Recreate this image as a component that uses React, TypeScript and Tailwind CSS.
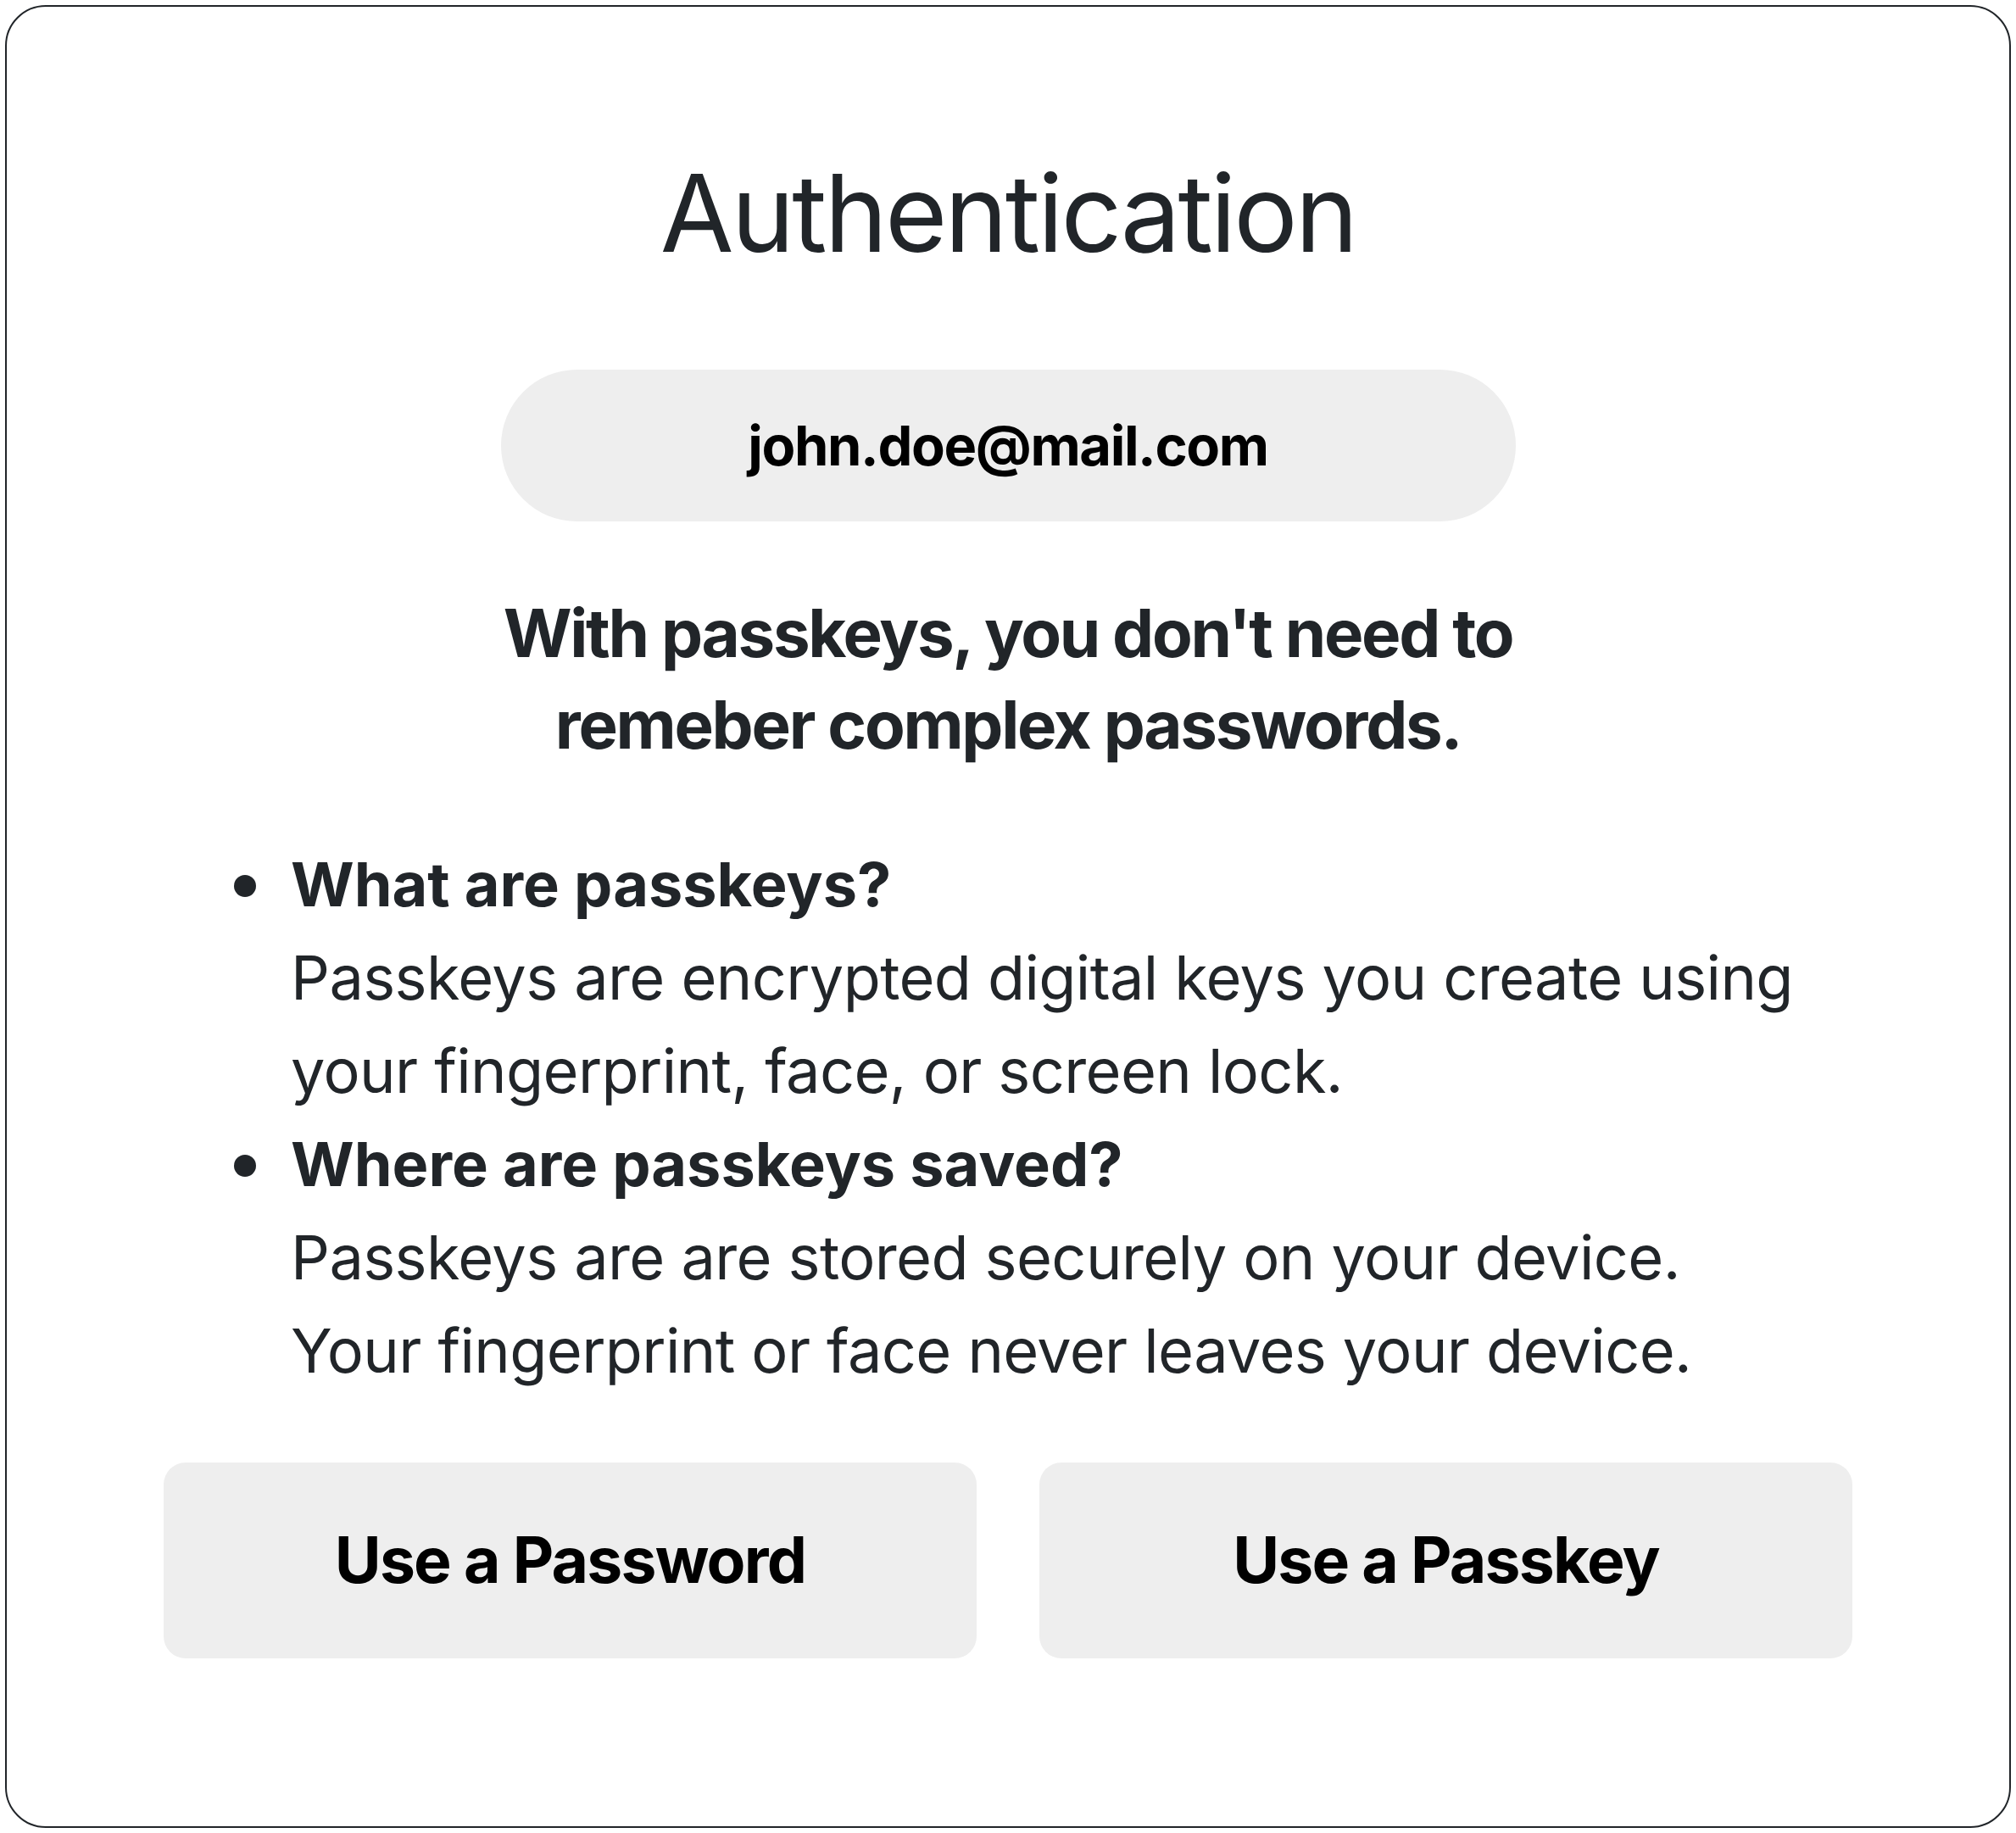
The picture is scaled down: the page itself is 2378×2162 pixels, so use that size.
import React from 'react'

const font = { fontFamily: 'Inter, "Noto Sans", sans-serif' }

function Bullet({ title, lines }: { title: string; lines: string[] }) {
  return (
    <li className="flex gap-[41px]">
      <div className="flex h-[110px] w-[26px] shrink-0 items-center">
        <span className="mt-[4px] block h-[26px] w-[26px] rounded-full bg-[#212529]" />
      </div>
      <div className="flex flex-col">
        <span className="font-bold">{title}</span>
        {lines.map((line) => (
          <span key={line} className="tracking-[-0.6px]">
            {line}
          </span>
        ))}
      </div>
    </li>
  )
}

export default function App() {
  return (
    <div className="bg-white p-[6px]" style={font}>
      <div className="flex h-[2150px] flex-col rounded-[48px] border-2 border-[#212529] px-[185px] pt-[168px] text-[#212529]">
        <h1 className="text-center text-[126px] font-normal leading-[1.2] tracking-[-3px]">Authentication</h1>

        <div className="mx-auto mt-[109px] flex h-[179px] w-[1197px] items-center justify-center rounded-full bg-[#eeeeee]">
          <span className="text-[65px] font-bold tracking-[-1.4px] text-black">john.doe@mail.com</span>
        </div>

        <p className="mt-[78px] flex flex-col items-center text-center text-[78px] font-bold leading-[108px] tracking-[-2.3px]">
          <span>With passkeys, you don't need to</span>
          <span>remeber complex passwords.</span>
        </p>

        <ul className="ml-[83px] mt-[79px] flex flex-col text-[72px] leading-[110px]">
          <Bullet
            title="What are passkeys?"
            lines={['Passkeys are encrypted digital keys you create using', 'your fingerprint, face, or screen lock.']}
          />
          <Bullet
            title="Where are passkeys saved?"
            lines={['Passkeys are are stored securely on your device.', 'Your fingerprint or face never leaves your device.']}
          />
        </ul>

        <div className="mt-[77px] grid grid-cols-2 gap-[74px]">
          <button className="flex h-[231px] items-center justify-center rounded-[26px] bg-[#eeeeee] text-[75px] font-bold tracking-[-1.8px] text-black">
            Use a Password
          </button>
          <button className="flex h-[231px] items-center justify-center rounded-[26px] bg-[#eeeeee] text-[75px] font-bold tracking-[-1.8px] text-black">
            Use a Passkey
          </button>
        </div>
      </div>
    </div>
  )
}
